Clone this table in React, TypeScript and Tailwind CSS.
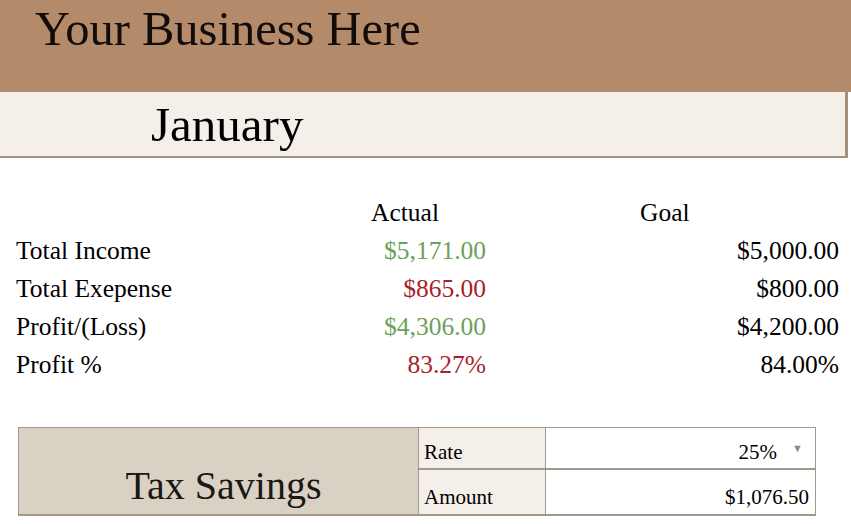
import React from "react";

const rows = [
  { label: "Total Income", actual: "$5,171.00", goal: "$5,000.00", good: true },
  { label: "Total Exepense", actual: "$865.00", goal: "$800.00", good: false },
  { label: "Profit/(Loss)", actual: "$4,306.00", goal: "$4,200.00", good: true },
  { label: "Profit %", actual: "83.27%", goal: "84.00%", good: false },
];

export default function App() {
  return (
    <div className="w-[851px] h-[524px] bg-white overflow-hidden text-black font-['Liberation_Serif','Times_New_Roman',serif]">
      {/* Business header */}
      <div className="h-[92px] bg-[#b38b6b] pl-[35px] pt-[3px]">
        <h1 className="text-[48.5px] leading-[52px] text-[#140c08]">Your Business Here</h1>
      </div>

      {/* Month band */}
      <div className="h-[66px] w-[848px] bg-[#f4f0e9] border-b-2 border-r-[3px] border-[#a3917d] pl-[151px] pt-[5px]">
        <h2 className="text-[49px] leading-[56px]">January</h2>
      </div>

      {/* Summary table */}
      <div className="mt-[36px] pl-[16px] w-[840px] text-[25.5px] leading-[38px]">
        <div className="grid grid-cols-[200px_270px_353px]">
          <div />
          <div className="pl-[155px]">Actual</div>
          <div className="pl-[154px]">Goal</div>
        </div>
        {rows.map((r) => (
          <div key={r.label} className="grid grid-cols-[200px_270px_353px]">
            <div>{r.label}</div>
            <div className={`text-right ${r.good ? "text-[#6b9f5b]" : "text-[#a81f2c]"}`}>{r.actual}</div>
            <div className="text-right">{r.goal}</div>
          </div>
        ))}
      </div>

      {/* Tax savings */}
      <div className="mt-[43px] ml-[18px] w-[798px] h-[89px] flex border-t border-l border-b-2 border-r border-[#a1998b]">
        <div className="w-[399px] bg-[#d9d2c4] flex items-end justify-center pl-[10px] pb-[6px]">
          <span className="text-[40px] leading-[44px] text-[#1a1714]">Tax Savings</span>
        </div>
        <div className="flex-1 flex flex-col text-[21px]">
          <div className="flex h-[42px] border-b-2 border-[#a1998b]">
            <div className="w-[128px] bg-[#f4f0e9] border-l border-r border-[#a1998b] flex items-end pl-[5px]">Rate</div>
            <div className="flex-1 flex items-end justify-end pr-[12px] gap-[15px]">
              <span>25%</span>
              <span className="text-[11px] text-[#8a8a8a] mb-[12px]">▼</span>
            </div>
          </div>
          <div className="flex flex-1">
            <div className="w-[128px] bg-[#f4f0e9] border-l border-r border-[#a1998b] flex items-end pl-[5px] pb-[1px]">Amount</div>
            <div className="flex-1 flex items-end justify-end pr-[6px] pb-[1px]">$1,076.50</div>
          </div>
        </div>
      </div>
    </div>
  );
}
